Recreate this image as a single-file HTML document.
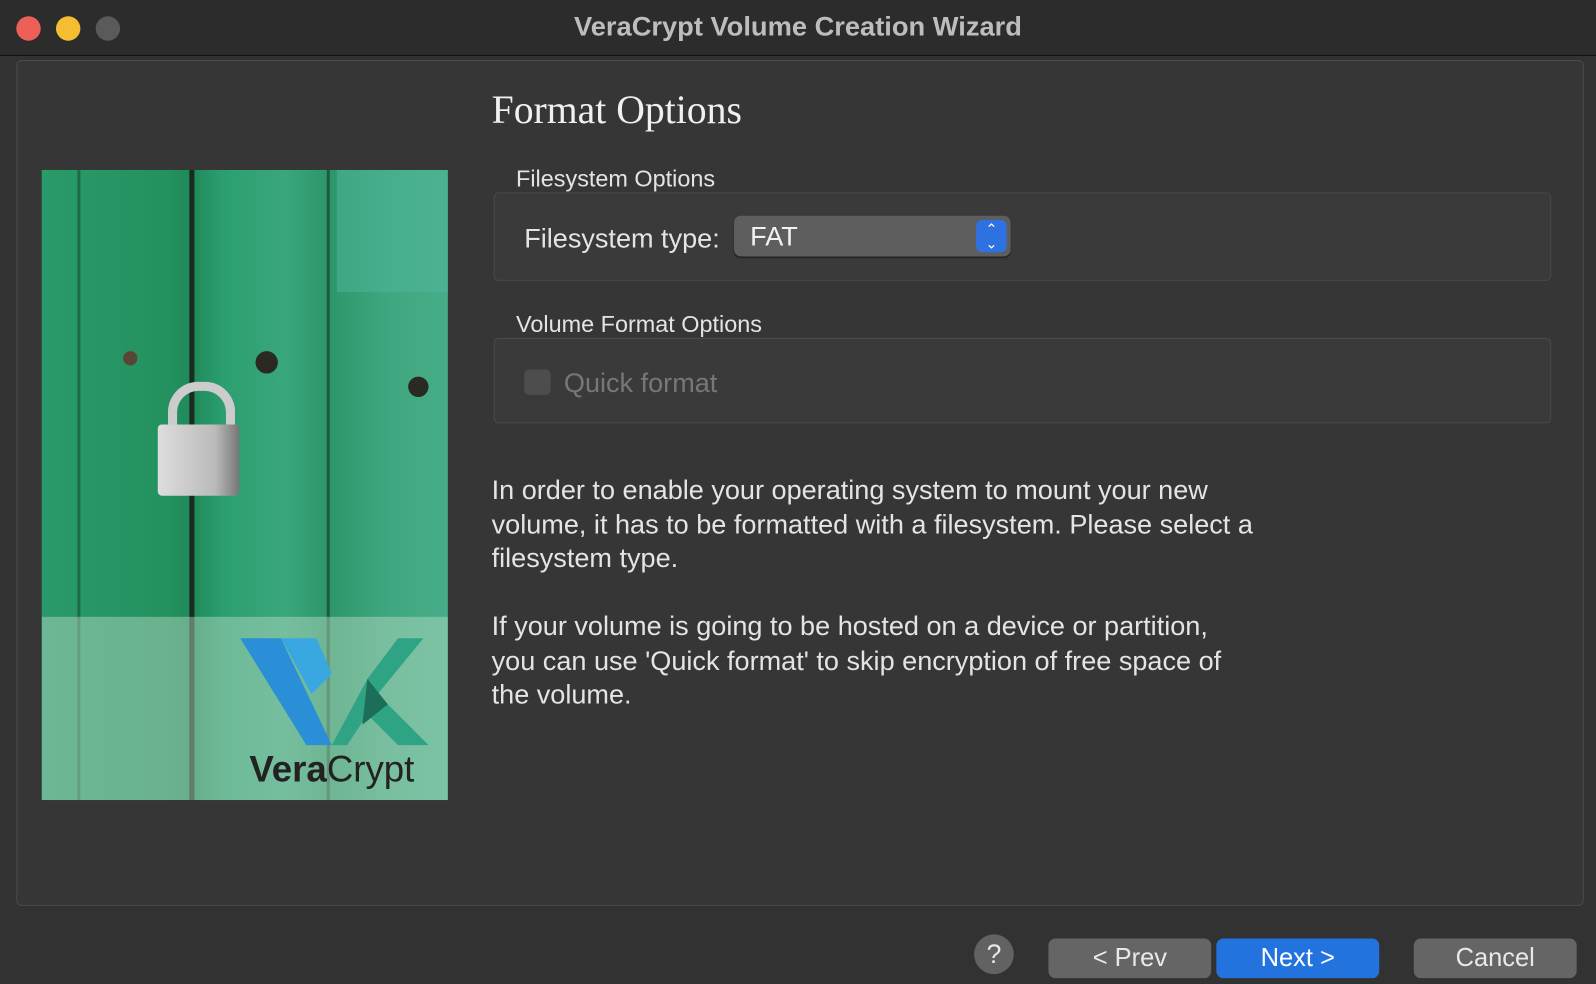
<!DOCTYPE html>
<html><head><style>
*{margin:0;padding:0;box-sizing:border-box}
body{width:1596px;height:984px;overflow:hidden;background:#323232;font-family:"Liberation Sans",sans-serif}
#w{width:1568px;height:967px;transform:scale(1.01786);transform-origin:0 0;position:relative;background:#323232}
.a{position:absolute}
.t{color:#e4e4e4;font-size:26.6px}
.btn{position:absolute;top:922px;height:39px;width:160px;border-radius:7px;background:#656565;color:#e8e8e8;font-size:25px;text-align:center;line-height:39px}
</style></head><body><div id="w">
<div class="a" style="left:0;top:0;width:1568px;height:55px;background:#2c2c2c;border-bottom:1px solid #111"></div>
<div class="a" style="left:16px;top:16px;width:24px;height:24px;border-radius:50%;background:#ee5f57"></div>
<div class="a" style="left:55px;top:16px;width:24px;height:24px;border-radius:50%;background:#f5bd31"></div>
<div class="a" style="left:94px;top:16px;width:24px;height:24px;border-radius:50%;background:#5a5a5a"></div>
<div class="a" style="left:0;width:1568px;top:11px;text-align:center;color:#bdbdbd;font-size:26.8px;font-weight:bold">VeraCrypt Volume Creation Wizard</div>
<div class="a" style="left:16px;top:59px;width:1540px;height:831px;border:1px solid #4a4a4a;border-radius:5px;background:#363636"></div>
<div class="a" style="left:483px;top:86px;font-family:'Liberation Serif',serif;font-size:39px;color:#f0f0f0">Format Options</div>
<div class="a" style="left:41px;top:167px;width:399px;height:619px;overflow:hidden;background:linear-gradient(90deg,#2a9a6a 0,#24925f 30%,#1f8a5a 37%,#2c9f70 45%,#3aa67c 60%,#2d966a 71%,#3fa77f 85%,#46ad88 100%)">
 <div class="a" style="left:145px;top:0;width:5px;height:619px;background:#1b2a22"></div>
 <div class="a" style="left:280px;top:0;width:3px;height:619px;background:#1d5d3e"></div>
 <div class="a" style="left:35px;top:0;width:3px;height:619px;background:#1e6b48"></div>
 <div class="a" style="left:290px;top:0;width:109px;height:120px;background:#4fb59b;opacity:.5"></div>
 <div class="a" style="left:80px;top:178px;width:14px;height:14px;border-radius:50%;background:#5a4535"></div>
 <div class="a" style="left:210px;top:178px;width:22px;height:22px;border-radius:50%;background:#2a2a22"></div>
 <div class="a" style="left:360px;top:203px;width:20px;height:20px;border-radius:50%;background:#2a2a22"></div>
 <div class="a" style="left:124px;top:208px;width:66px;height:60px;border:9px solid #ccc;border-bottom:none;border-radius:30px 30px 0 0"></div>
 <div class="a" style="left:114px;top:250px;width:80px;height:70px;background:linear-gradient(90deg,#ddd,#bbb 70%,#777);border-radius:4px"></div>
 <div class="a" style="left:0;top:439px;width:399px;height:180px;background:rgba(190,220,200,.45)"></div>
 <svg class="a" style="left:190px;top:455px" width="200" height="115" viewBox="0 0 200 115">
  <polygon points="5,5 45,5 95,110 70,110" fill="#2a8fd6"/>
  <polygon points="45,5 80,5 95,40 75,60" fill="#3aa8e0"/>
  <polygon points="95,110 130,45 160,5 185,5 140,60 190,110 160,110 130,80 110,110" fill="#2fa485"/>
  <polygon points="130,45 150,70 125,90" fill="#1d6e58"/>
 </svg>
 <div class="a" style="left:204px;top:568px;font-size:36px;color:#222"><b>Vera</b>Crypt</div>
</div>
<div class="a t" style="left:507px;top:162px;font-size:23px">Filesystem Options</div>
<div class="a" style="left:485px;top:189px;width:1039px;height:87px;border:1px solid #4a4a4a;border-radius:5px;background:#3a3a3a"></div>
<div class="a t" style="left:515px;top:219px">Filesystem type:</div>
<div class="a" style="left:721px;top:212px;width:272px;height:40px;border-radius:7px;background:#5e5e5e;box-shadow:0 1px 1px #222"></div>
<div class="a t" style="left:737px;top:217px;color:#f2f2f2">FAT</div>
<div class="a" style="left:959px;top:216px;width:30px;height:32px;border-radius:6px;background:#2e71e0;color:#fff;font-size:14px;text-align:center;line-height:14px;padding-top:2px">⌃<br>⌄</div>
<div class="a t" style="left:507px;top:305px;font-size:23px">Volume Format Options</div>
<div class="a" style="left:485px;top:332px;width:1039px;height:84px;border:1px solid #4a4a4a;border-radius:5px;background:#3a3a3a"></div>
<div class="a" style="left:515px;top:363px;width:26px;height:25px;border-radius:5px;background:#4d4d4d"></div>
<div class="a t" style="left:554px;top:361px;color:#777">Quick format</div>
<div class="a t" style="left:483px;top:465px;line-height:33.5px;width:900px">In order to enable your operating system to mount your new<br>volume, it has to be formatted with a filesystem. Please select a<br>filesystem type.</div>
<div class="a t" style="left:483px;top:599px;line-height:33.5px;width:900px">If your volume is going to be hosted on a device or partition,<br>you can use 'Quick format' to skip encryption of free space of<br>the volume.</div>
<div class="a" style="left:957px;top:918px;width:39px;height:39px;border-radius:50%;background:#626262;color:#e8e8e8;font-size:26px;text-align:center;line-height:39px">?</div>
<div class="btn" style="left:1030px">&lt; Prev</div>
<div class="btn" style="left:1195px;background:#2373de;color:#fff">Next &gt;</div>
<div class="btn" style="left:1389px">Cancel</div>
</div></body></html>
